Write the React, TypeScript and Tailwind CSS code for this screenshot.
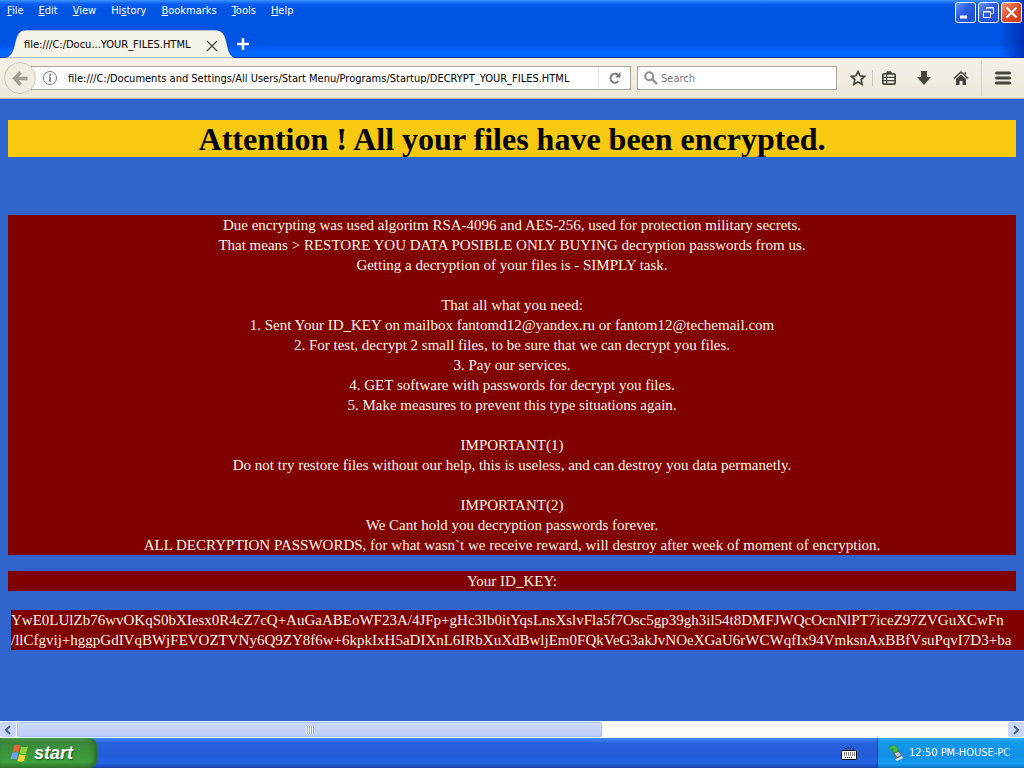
import type { ReactNode } from 'react';

const menus = ['File', 'Edit', 'View', 'History', 'Bookmarks', 'Tools', 'Help'];
const accessKey: Record<string, number> = { History: 2 };

const lines = [
  'Due encrypting was used algoritm RSA-4096 and AES-256, used for protection military secrets.',
  'That means > RESTORE YOU DATA POSIBLE ONLY BUYING decryption passwords from us.',
  'Getting a decryption of your files is - SIMPLY task.',
  '',
  'That all what you need:',
  '1. Sent Your ID_KEY on mailbox fantomd12@yandex.ru or fantom12@techemail.com',
  '2. For test, decrypt 2 small files, to be sure that we can decrypt you files.',
  '3. Pay our services.',
  '4. GET software with passwords for decrypt you files.',
  '5. Make measures to prevent this type situations again.',
  '',
  'IMPORTANT(1)',
  'Do not try restore files without our help, this is useless, and can destroy you data permanetly.',
  '',
  'IMPORTANT(2)',
  'We Cant hold you decryption passwords forever.',
  'ALL DECRYPTION PASSWORDS, for what wasn`t we receive reward, will destroy after week of moment of encryption.',
];

const keyLines = [
  'YwE0LUlZb76wvOKqS0bXIesx0R4cZ7cQ+AuGaABEoWF23A/4JFp+gHc3Ib0itYqsLnsXslvFla5f7Osc5gp39gh3il54t8DMFJWQcOcnNlPT7iceZ97ZVGuXCwFn',
  '/llCfgvij+hggpGdIVqBWjFEVOZTVNy6Q9ZY8f6w+6kpkIxH5aDIXnL6IRbXuXdBwljEm0FQkVeG3akJvNOeXGaU6rWCWqfIx94VmksnAxBBfVsuPqvI7D3+ba',
];

function MenuLabel({ text }: { text: string }) {
  const i = accessKey[text] ?? 0;
  return (
    <>
      {text.slice(0, i)}
      <span className="underline underline-offset-1">{text[i]}</span>
      {text.slice(i + 1)}
    </>
  );
}

function WindowButton({ label, className, children }: { label: string; className: string; children: ReactNode }) {
  return (
    <button aria-label={label} className={`h-[21px] w-[21px] rounded-[3px] border border-white ${className}`}>
      <svg viewBox="0 0 19 19" className="block h-[19px] w-[19px]" fill="none" stroke="white">
        {children}
      </svg>
    </button>
  );
}

function ToolButton({ label, className, children }: { label: string; className: string; children: ReactNode }) {
  return (
    <button aria-label={label} className={`flex h-6 items-center justify-center text-[#45453e] ${className}`}>
      <svg viewBox="0 0 16 16" className="h-4 w-4" fill="currentColor">
        {children}
      </svg>
    </button>
  );
}

export default function App() {
  return (
    <div className="flex min-h-screen flex-col overflow-hidden bg-[#3165ce] font-['DejaVu_Sans_Condensed','DejaVu_Sans',sans-serif] text-[11px]">
      <header className="h-[58px] border-b border-[#003399] bg-[linear-gradient(270deg,#0030b8_0px,#0040d000_24px),linear-gradient(180deg,#3a93ff_0px,#0a5cf0_4px,#0054e3_9px,#0054e3_45px,#0066ff_51px,#0066ff_100%)]">
        <div className="flex justify-between">
          <nav className="flex h-[30px] gap-[15px] pt-[3px] pl-[7px] leading-4 text-white">
            {menus.map((m) => (
              <button key={m} className="h-4">
                <MenuLabel text={m} />
              </button>
            ))}
          </nav>
          <div className="flex gap-[2px] pt-[2px] pr-[2px]">
            <WindowButton label="Minimize" className="bg-[linear-gradient(135deg,#6b95f5,#2a5be0_45%,#1d4fd8)]">
              <path d="M4 14h7" strokeWidth="3" />
            </WindowButton>
            <WindowButton label="Restore" className="bg-[linear-gradient(135deg,#6b95f5,#2a5be0_45%,#1d4fd8)]">
              <path d="M7.5 7V4.5h7v6H12M7 5h8" />
              <path d="M4.500 8.500h7v6h-7zM4 9h8" />
            </WindowButton>
            <WindowButton label="Close" className="bg-[linear-gradient(135deg,#f09a80,#e0522c_45%,#cc3a12)]">
              <path d="M4.500 4.500l10 10M14.500 4.500l-10 10" strokeWidth="2.200" />
            </WindowButton>
          </div>
        </div>
        <div className="flex h-7 items-stretch">
          <div className="relative flex w-[234px] items-center pl-6">
            <svg viewBox="0 0 234 28" className="absolute inset-0 h-7 w-[234px]" aria-hidden="true">
              <path
                d="M0 28H1C9 28 12 25 14.500 15C16.500 5 19 0 26 0H215C223 0 225 5 227 14C229 24 231 28 238 28Z"
                fill="#f5f2e8"
                stroke="#0a3fae"
                strokeWidth="0.600"
              />
            </svg>
            <span className="relative pt-[2px] text-black">file:///C:/Docu...YOUR_FILES.HTML</span>
            <button aria-label="Close tab" className="relative mr-4 ml-auto pt-1">
              <svg viewBox="0 0 12 12" className="h-3 w-3" stroke="#444" strokeWidth="1.200">
                <path d="M1 1l10 10M11 1L1 11" />
              </svg>
            </button>
          </div>
          <button aria-label="New tab" className="pl-[2px]">
            <svg viewBox="0 0 14 14" className="h-[14px] w-[14px]" stroke="white" strokeWidth="2.400">
              <path d="M7 1v12M1 7h12" />
            </svg>
          </button>
        </div>
      </header>

      <div className="flex h-[41px] items-center border-b border-[#b5b9b5] bg-[linear-gradient(180deg,#f5f0e9,#ece9d8)] pl-1">
        <button aria-label="Back" className="z-10 h-8 w-8 rounded-full border border-[#cfcbbb] bg-[#f0ecdf]">
          <svg viewBox="0 0 30 30" className="h-[30px] w-[30px]" fill="none" stroke="#a19e94" strokeWidth="3.400">
            <path d="M22.500 15.500H10M15.500 9.500l-6 6 6 6" />
          </svg>
        </button>
        <div className="-ml-[5px] flex h-6 flex-1 items-center border border-[#a9a59a] bg-white">
          <svg viewBox="0 0 16 16" className="ml-[10px] h-4 w-4 shrink-0" fill="none" stroke="#777">
            <circle cx="8" cy="8" r="6.500" />
            <path d="M8 7v5M8 4v2" strokeWidth="1.600" />
          </svg>
          <input
            aria-label="Address"
            className="ml-[10px] min-w-0 flex-1 bg-transparent pt-[2px] text-black outline-none"
            defaultValue="file:///C:/Documents and Settings/All Users/Start Menu/Programs/Startup/DECRYPT_YOUR_FILES.HTML"
          />
          <button aria-label="Reload" className="flex h-full w-8 items-center justify-center border-l border-[#eeeeea]">
            <svg viewBox="0 0 14 14" className="h-[14px] w-[14px]" fill="none" stroke="#777" strokeWidth="2">
              <path d="M10.500 10.200A4.500 4.500 0 1 1 10 3.800" />
              <path d="M12.500 1v5.500H7z" fill="#777" stroke="none" />
            </svg>
          </button>
        </div>
        <div className="ml-[6px] flex h-6 w-[200px] items-center border border-[#a9a59a] bg-white">
          <svg viewBox="0 0 14 14" className="ml-[6px] h-[14px] w-[14px]" fill="none" stroke="#8e8e8e">
            <circle cx="5.200" cy="5.200" r="4" strokeWidth="2" />
            <path d="M8 8l5 5" strokeWidth="2.400" />
          </svg>
          <input
            aria-label="Search"
            placeholder="Search"
            className="ml-[3px] min-w-0 flex-1 bg-transparent pt-[2px] outline-none placeholder:text-[#777]"
          />
        </div>
        <ToolButton label="Bookmark this page" className="ml-[7px] w-[28px]">
          <path d="M8 1.500l2 4.300 4.700.6-3.500 3.200.9 4.700L8 12l-4.100 2.300.9-4.700L1.300 6.400 6 5.800z" fill="none" stroke="currentColor" strokeWidth="1.700" />
        </ToolButton>
        <span className="h-4 w-px bg-[#cbc8bb]" />
        <ToolButton label="Bookmarks menu" className="w-[32px]">
          <path d="M5 3l1-1.800h4L11 3h2a2 2 0 0 1 2 2v8a2 2 0 0 1-2 2H3a2 2 0 0 1-2-2V5a2 2 0 0 1 2-2z" />
          <path d="M2.700 5.700h2.300M6.200 5.700H13.300M2.700 9h2.300M6.200 9H13.300M2.700 12.300h2.300M6.200 12.300H13.300" stroke="#f3efe5" strokeWidth="2" />
        </ToolButton>
        <ToolButton label="Downloads" className="w-[38px]">
          <path d="M5 1h6v6h4l-7 8-7-8h4z" />
        </ToolButton>
        <ToolButton label="Home" className="w-[36px]">
          <path d="M8 1l7.500 7-1 1L8 3 1.500 9l-1-1z" />
          <path d="M8 4.500l5 4.600V15H9.500v-4h-3v4H3V9.100zM11.500 2H13v3l-1.500-1.500z" />
        </ToolButton>
        <div className="ml-[2px] h-9 w-px bg-[#d8d5c8]" />
        <ToolButton label="Open menu" className="w-[42px]">
          <path d="M1.500 3h13M1.500 8h13M1.500 13h13" stroke="currentColor" strokeWidth="3" strokeLinecap="round" />
        </ToolButton>
      </div>

      <main className="flex-1 overflow-hidden px-2 pt-[21px] font-['Liberation_Serif',serif] text-[15px] leading-5 text-[#fff5e6]">
        <h1 className="bg-[#f7ca11] pt-[2px] text-center text-[32px] leading-[35px] font-bold text-black">
          Attention ! All your files have been encrypted.
        </h1>
        <div className="mt-[58px] bg-[#800000] text-center">
          {lines.map((line, i) => (
            <p key={i} className="min-h-5">
              {line}
            </p>
          ))}
        </div>
        <p className="mt-4 bg-[#800000] text-center">Your ID_KEY:</p>
        <div className="mt-[19px] -mr-2 ml-[3px] bg-[#800000] whitespace-nowrap">
          {keyLines.map((line) => (
            <p key={line}>{line}</p>
          ))}
        </div>
      </main>

      <div className="flex h-[17px] items-center border-y border-white bg-[#fbfaf4]">
        <button aria-label="Scroll left" className="flex h-full w-4 items-center justify-center rounded-[2px] bg-[#c8d6fb]">
          <svg viewBox="0 0 8 10" className="h-[10px] w-2" fill="none" stroke="#4d6185" strokeWidth="2">
            <path d="M6 1L2 5l4 4" />
          </svg>
        </button>
        <div className="h-full flex-1">
          <div className="ml-px flex h-full w-[59%] items-center justify-center gap-px rounded-[2px] border border-[#a9bff0] bg-[linear-gradient(180deg,#cbdafd,#bccdf8)]">
            {[0, 1, 2, 3].map((n) => (
              <span key={n} className="h-2 w-px bg-[#eef4fe] shadow-[1px_0_0_#8cb0f8]" />
            ))}
          </div>
        </div>
        <button aria-label="Scroll right" className="flex h-full w-4 items-center justify-center rounded-[2px] bg-[#c8d6fb]">
          <svg viewBox="0 0 8 10" className="h-[10px] w-2" fill="none" stroke="#4d6185" strokeWidth="2">
            <path d="M2 1l4 4-4 4" />
          </svg>
        </button>
      </div>

      <footer className="flex h-[30px] items-stretch bg-[linear-gradient(180deg,#3a80f0_0px,#3b82f2_2px,#2560dc_5px,#245ddb_60%,#2463e4_85%,#1941a5_100%)]">
        <button className="flex w-[97px] items-center rounded-r-[8px] bg-[linear-gradient(180deg,#5eac56_0px,#3c873c_4px,#3a963a_50%,#3fa03f_80%,#2f7a2f_100%)] pl-[10px] shadow-[inset_-3px_0_5px_#2a6b2a]">
          <svg viewBox="0 0 20 20" className="h-5 w-5">
            <path d="M4 3q3-2 6-.5L8.500 9q-3-1.500-6 0z" fill="#ee6337" />
            <path d="M11 3.500q3 1.500 7 0L16 10.500q-3 1.500-6.500 0z" fill="#8fd13a" />
            <path d="M2.300 10q3-1.500 6-.3L7 16.500q-3-1.500-6.500 0z" fill="#6e9ef5" />
            <path d="M9.300 11.200q3 1.500 6.500.3L14 18q-3 1.500-6.500-.3z" fill="#fbd13a" />
          </svg>
          <span className="ml-1 font-['Liberation_Sans',sans-serif] text-[18px] leading-6 font-bold text-white italic [text-shadow:1px_1px_1px_#1f5a1f]">start</span>
        </button>
        <button aria-label="Keyboard" className="mr-5 ml-auto">
          <svg viewBox="0 0 16 16" className="h-4 w-4">
            <path d="M4 3.500h2v-1h3v1h3v2" fill="none" stroke="#0a1c50" strokeDasharray="2 1" />
            <rect x="0.500" y="5.500" width="15" height="9" rx="1" fill="white" stroke="black" />
            <path d="M3 8h11M3 10h11M4 12.500h8" stroke="black" strokeDasharray="1 1" />
          </svg>
        </button>
        <div className="flex w-[147px] items-center border-l border-[#0b3f9c] bg-[linear-gradient(180deg,#3aa8f5_0px,#139ae8_4px,#1290e8_60%,#16a0f0_85%,#0d70c0_100%)] pl-[9px] text-white">
          <svg viewBox="0 0 18 18" className="h-[18px] w-[18px]">
            <path d="M5 8l7-2 4 6-7 4z" fill="#5c6f80" />
            <path d="M7.500 9l4-1 2.500 3-4 2z" fill="#b9c9d6" />
            <path d="M8 15.500l7-3.500 1 2-6 3z" fill="#dfe5ea" />
            <path d="M1.500 4l5-3 4 2 .5 4.500-3 1.500-2-1-.5-3-2 1z" fill="#45b83a" stroke="#2a7d28" strokeWidth="0.500" />
          </svg>
          <span className="ml-1 pt-px whitespace-nowrap">12:50 PM-HOUSE-PC</span>
        </div>
      </footer>
    </div>
  );
}
